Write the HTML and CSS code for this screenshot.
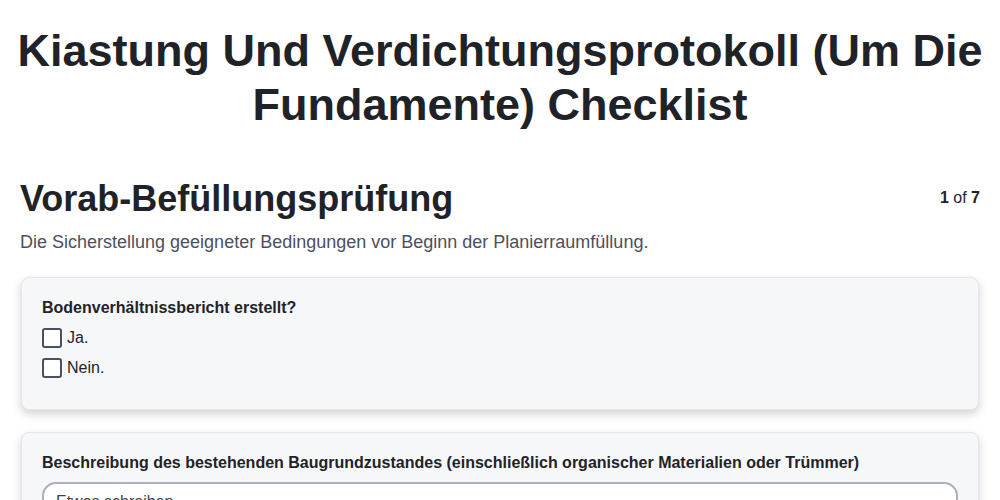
FILE: index.html
```html
<!DOCTYPE html>
<html lang="de">
<head>
<meta charset="utf-8">
<title>Checklist</title>
<link rel="stylesheet" href="styles.css">
</head>
<body>
<div class="page">
  <h1 class="title">Kiastung Und Verdichtungsprotokoll (Um Die Fundamente) Checklist</h1>
  <div class="section-head">
    <h2 class="section-title">Vorab-Befüllungsprüfung</h2>
    <div class="pager"><b>1</b> of <b>7</b></div>
  </div>
  <p class="section-desc">Die Sicherstellung geeigneter Bedingungen vor Beginn der Planierraumfüllung.</p>

  <div class="card">
    <div class="label">Bodenverhältnissbericht erstellt?</div>
    <div class="options">
      <label class="option"><span class="box"></span>Ja.</label>
      <label class="option"><span class="box"></span>Nein.</label>
    </div>
  </div>

  <div class="card">
    <div class="label">Beschreibung des bestehenden Baugrundzustandes (einschließlich organischer Materialien oder Trümmer)</div>
    <div class="textarea">Etwas schreiben...</div>
  </div>
</div>
</body>
</html>
```
FILE: styles.css
```css
html, body {
  margin: 0;
  padding: 0;
  background: #ffffff;
}
body {
  font-family: "Liberation Sans", Arial, sans-serif;
  color: #1f2328;
}
.page {
  padding: 24px 20px 40px;
}
.title {
  margin: 0 -12px 45px;
  font-size: 45px;
  line-height: 54px;
  font-weight: 700;
  text-align: center;
  color: #1f2328;
}
.section-head {
  display: flex;
  justify-content: space-between;
  align-items: flex-start;
}
.section-title {
  margin: 0;
  font-size: 36px;
  line-height: 43px;
  font-weight: 700;
  color: #1f2328;
}
.pager {
  font-size: 16px;
  line-height: 24px;
  margin-top: 9px;
  color: #1f2328;
}
.section-desc {
  margin: 10px 0 23px;
  font-size: 18px;
  line-height: 24px;
  color: #4b5060;
}
.card {
  background: #f6f7f9;
  border: 1px solid #e4e6ea;
  border-radius: 8px;
  box-shadow: 0 4px 10px rgba(0, 0, 0, 0.18);
  padding: 18px 20px 31px;
  margin: 0 1px 22px;
}
.label {
  font-size: 16px;
  line-height: 24px;
  font-weight: 700;
  color: #1f2328;
}
.options {
  margin-top: 8px;
  display: flex;
  flex-direction: column;
  gap: 10px;
}
.option {
  display: flex;
  align-items: center;
  gap: 5px;
  font-size: 16px;
  line-height: 20px;
  color: #1f2328;
}
.box {
  width: 16px;
  height: 16px;
  border: 2px solid #4b5060;
  border-radius: 3px;
  background: #fff;
}
.textarea {
  margin-top: 7px;
  border: 2px solid #aab1b8;
  border-radius: 14px;
  background: #fff;
  padding: 6px 12px;
  font-size: 16px;
  line-height: 24px;
  color: #3f434a;
  height: 80px;
}
```
